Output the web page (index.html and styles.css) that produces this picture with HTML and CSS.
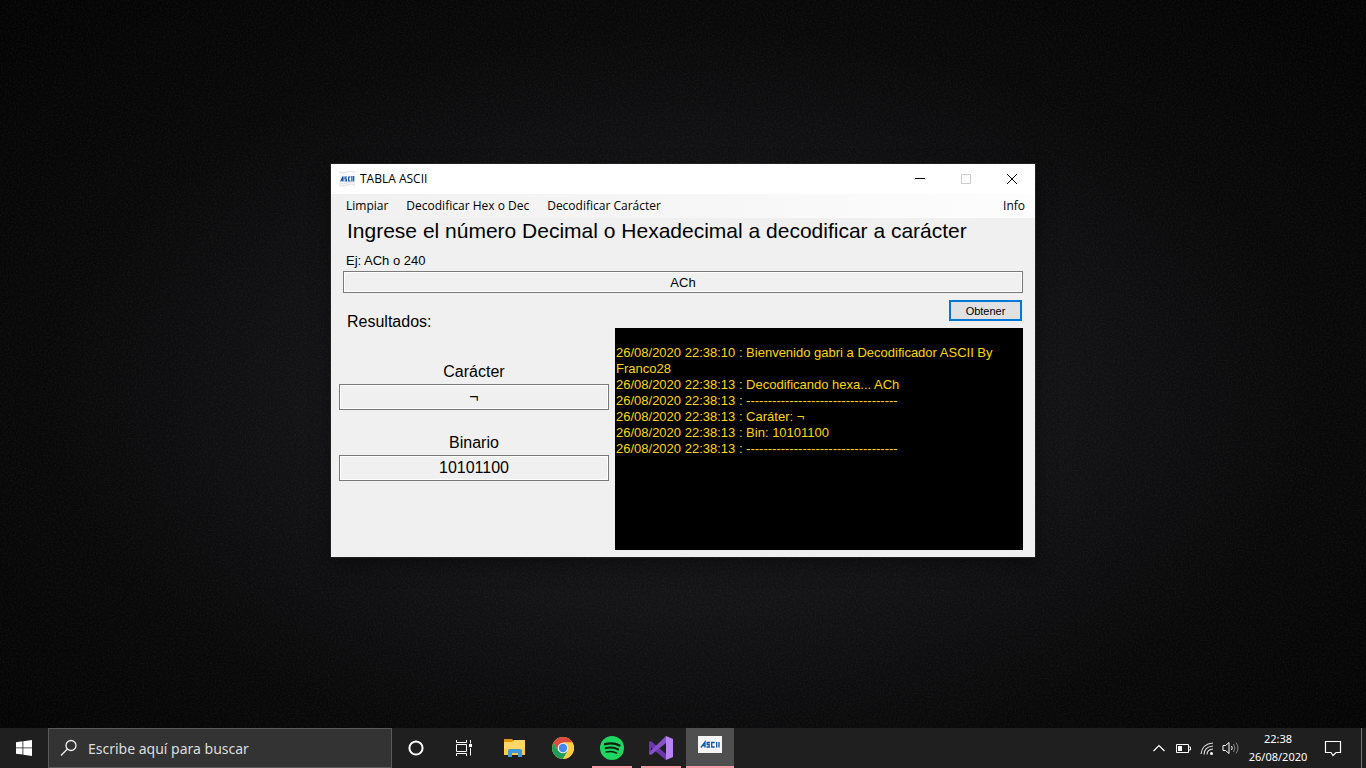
FILE: index.html
```html
<!DOCTYPE html>
<html lang="es">
<head>
<meta charset="utf-8">
<title>TABLA ASCII</title>
<link rel="stylesheet" href="styles.css">
</head>
<body>
<svg class="grain" aria-hidden="true"><filter id="noise"><feTurbulence type="fractalNoise" baseFrequency="0.6" numOctaves="2" seed="4"/><feColorMatrix type="matrix" values="0 0 0 0 1  0 0 0 0 1  0 0 0 0 1  0.35 0 0 0 -0.13"/></filter><rect width="100%" height="100%" filter="url(#noise)"/></svg>
<main class="desktop">
  <section class="window" aria-label="TABLA ASCII">
    <header class="titlebar">
      <svg class="app-icon" width="16" height="16" viewBox="0 0 16 16"><rect width="16" height="16" fill="#fafafa"/><path d="M0 1q4 2 8 0t8 0M0 14q4 2 8 0t8 0M0 12q4 2 8 0t8 0" fill="none" stroke="#e4e4e4"/><path d="M1.700 10.500L4 5.500v5M2.500 9H4M8 6H6v2h1.500v2h-2M11.500 6H9.700v4h1.800M12.900 5v5.500M14.700 5v5.500" fill="none" stroke="#0b4fa3" stroke-width="1.200"/></svg>
      <h1 class="title">TABLA ASCII</h1>
      <div class="captions">
        <button class="caption" aria-label="Minimizar"><svg width="10" height="10" viewBox="0 0 10 10"><path d="M0 4.500h10" stroke="#000"/></svg></button>
        <button class="caption" aria-label="Maximizar" disabled><svg width="10" height="10" viewBox="0 0 10 10"><path d="M.5.500h9v9h-9z" fill="none" stroke="#ccc"/></svg></button>
        <button class="caption" aria-label="Cerrar"><svg width="12" height="12" viewBox="0 0 12 12"><path d="M1 1l10 10M11 1L1 11" stroke="#000"/></svg></button>
      </div>
    </header>
    <nav class="menubar">
      <button class="menu">Limpiar</button>
      <button class="menu">Decodificar Hex o Dec</button>
      <button class="menu">Decodificar Carácter</button>
      <button class="menu menu-end">Info</button>
    </nav>
    <form class="content" onsubmit="return false">
      <h2 class="heading">Ingrese el número Decimal o Hexadecimal a decodificar a carácter</h2>
      <label class="hint" for="code">Ej: ACh o 240</label>
      <input class="field field-main" id="code" type="text" value="ACh">
      <div class="columns">
        <div class="results">
          <h3 class="results-title">Resultados:</h3>
          <label class="result-label" for="char">Carácter</label>
          <input class="field field-result" id="char" type="text" value="¬" readonly>
          <label class="result-label" for="bin">Binario</label>
          <input class="field field-result" id="bin" type="text" value="10101100" readonly>
        </div>
        <div class="output">
          <button class="submit" type="submit">Obtener</button>
          <textarea class="log" aria-label="Registro" readonly>

26/08/2020 22:38:10 : Bienvenido gabri a Decodificador ASCII By Franco28
26/08/2020 22:38:13 : Decodificando hexa... ACh
26/08/2020 22:38:13 : -----------------------------------
26/08/2020 22:38:13 : Caráter: ¬
26/08/2020 22:38:13 : Bin: 10101100
26/08/2020 22:38:13 : -----------------------------------</textarea>
        </div>
      </div>
    </form>
  </section>
</main>
<footer class="taskbar">
  <button class="start" aria-label="Inicio"><svg width="16" height="16" viewBox="0 0 16 16" fill="#fff"><path d="M0 2.200L6.500 1.300V7.500H0zM7.300 1.200L16 0v7.500H7.300zM0 8.300h6.500v6.300L0 13.700zM7.300 8.300H16V16l-8.700-1.200z"/></svg></button>
  <label class="search">
    <svg width="18" height="18" viewBox="0 0 18 18" fill="none" stroke="#eee" stroke-width="1.300"><circle cx="11" cy="6.500" r="5"/><path d="M7.400 10L1 16.500"/></svg>
    <input class="search-input" type="text" placeholder="Escribe aquí para buscar" aria-label="Buscar">
  </label>
  <div class="apps">
    <button class="app" aria-label="Cortana"><svg width="24" height="24" viewBox="0 0 24 24"><circle cx="12" cy="12" r="6.600" fill="none" stroke="#fff" stroke-width="2"/></svg></button>
    <button class="app" aria-label="Vista de tareas"><svg width="24" height="24" viewBox="0 0 24 24" fill="none" stroke="#fff"><path d="M3.500 4v2.500h10V4M3.500 8.500h10v7h-10zM3.500 20v-2.500h10V20M17.500 4v3.500M17.500 12v7.500"/><path d="M16 8h3v3h-3z" fill="#fff" stroke="none"/></svg></button>
    <button class="app" aria-label="Explorador de archivos"><svg width="24" height="24" viewBox="0 0 24 24"><path d="M2 3h8l2 2v2H2z" fill="#e09b0c"/><path d="M2 6h8l2-2h11v15H2z" fill="#ffd667"/><path d="M2 13h21v6H2z" fill="#fbc94c"/><path d="M6 21v-6q0-2 2-2h10q2 0 2 2v6h-4v-4h-6v4z" fill="#3d9bdc"/></svg></button>
    <button class="app" aria-label="Google Chrome"><svg width="24" height="24" viewBox="0 0 24 24"><circle cx="12" cy="12" r="11" fill="#fbcf45"/><path d="M2.500 6.500A11 11 0 0 1 21.500 6.500H12L7.200 14.700z" fill="#dc4b3f"/><path d="M2.500 6.500A11 11 0 0 0 12 23l4.800-8.300H7.200z" fill="#1e9e5a"/><path d="M21.500 6.500H12l4.800 8.200L12 23A11 11 0 0 0 21.500 6.500z" fill="#fccd43"/><circle cx="12" cy="12" r="5.300" fill="#f3f3f3"/><circle cx="12" cy="12" r="4.200" fill="#4688f1"/></svg></button>
    <button class="app app-open" aria-label="Spotify"><svg width="24" height="24" viewBox="0 0 24 24"><circle cx="12" cy="12" r="12" fill="#1ed760"/><g fill="none" stroke="#101e15" stroke-linecap="round"><path d="M5 8.200q8-2.300 14.500 1.300" stroke-width="2.300"/><path d="M5.600 12.200q7-2 12.500 1.200" stroke-width="1.900"/><path d="M6.200 16q6-1.500 10.500 1.100" stroke-width="1.600"/></g></svg></button>
    <button class="app app-open" aria-label="Visual Studio"><svg width="24" height="24" viewBox="0 0 24 24"><path d="M0 6l2-1 15 13v6L2 11.500V17l-2 1z" fill="#6c36ad"/><path d="M0 18l2 1L17 7V0L2 14.500z" fill="#8651c9"/><path d="M17 0l7 3v18l-7 3z" fill="#b783f5"/></svg></button>
    <button class="app app-active" aria-label="TABLA ASCII"><svg width="24" height="24" viewBox="0 0 24 24"><path d="M0 1h24v17H0z" fill="#f4f4f4"/><path d="M3 12.500L7 7v5.500M4.500 10.700H7M12 7.500H9.200v2h2v2.500H8.500M16.700 7.500h-3V12h3M18.700 7v5.500M21 7v5.500" fill="none" stroke="#0b57b0" stroke-width="1.300"/></svg></button>
  </div>
  <div class="tray">
    <button class="tray-item" aria-label="Iconos ocultos"><svg width="16" height="16" viewBox="0 0 16 16" fill="none" stroke="#fff" stroke-width="1.200"><path d="M2.500 11L8 5.500l5.500 5.500"/></svg></button>
    <button class="tray-item" aria-label="Batería"><svg width="16" height="16" viewBox="0 0 16 16"><path d="M1.500 4.500h12v8h-12zM14 7h1.500v3H14" fill="none" stroke="#fff"/><path d="M3 6h4v5H3z" fill="#fff"/></svg></button>
    <button class="tray-item" aria-label="Red"><svg width="16" height="16" viewBox="0 0 16 16" fill="none" stroke="#ddd" stroke-width="1.100"><path d="M2 14Q3 4 14 3M5 14.500Q5 7 14 6M8 14.500Q8 9.500 14 9"/><circle cx="12.500" cy="13.500" r="1.500" fill="#fff" stroke="none"/></svg></button>
    <button class="tray-item" aria-label="Volumen"><svg width="18" height="16" viewBox="0 0 18 16" fill="none" stroke="#fff"><path d="M1 5.500h2.500L7 2.500v11l-3.500-3H1z"/><path d="M9.500 6q1.500 2 0 4"/><path d="M11.500 4q3 4 0 8M14 2.500q4 5.500 0 11" stroke="#888"/></svg></button>
    <time class="clock" datetime="2020-08-26T22:38"><span>22:38</span><span>26/08/2020</span></time>
    <button class="notices" aria-label="Notificaciones"><svg width="18" height="18" viewBox="0 0 18 18" fill="none" stroke="#fff" stroke-width="1.200"><path d="M1.500 2.500h15v11H12l-3 3-2-3H1.500z"/></svg></button>
    <button class="peek" aria-label="Mostrar escritorio"></button>
  </div>
</footer>
</body>
</html>
```
FILE: styles.css
```css
* { box-sizing: border-box; }
body {
  margin: 0;
  min-height: 100vh;
  display: flex;
  flex-direction: column;
  background: radial-gradient(ellipse at 50% 52%, #18181a 0%, #131315 38%, #09090a 65%, #030304 100%);
  font-family: "Liberation Sans", Arial, sans-serif;
  color: #000;
}
button, input, textarea { font: inherit; color: inherit; border: 0; border-radius: 0; margin: 0; padding: 0; background: none; outline: 0; }
svg { display: block; flex: none; }
h1, h2, h3 { margin: 0; font-weight: 400; }
.grain { position: absolute; inset: 0; width: 100%; height: 100%; opacity: .25; }
.desktop { position: relative; flex: 1; display: flex; align-items: center; justify-content: center; padding-bottom: 7px; }
.window { width: 704px; max-width: 100%; background: #f0f0f0; box-shadow: 0 0 0 1px #202020, 0 8px 20px rgba(0, 0, 0, .4); }
.titlebar { display: flex; align-items: center; height: 30px; padding-left: 8px; gap: 5px; background: #fff; }
.title { font: 12px/30px "Open Sans", "Noto Sans", sans-serif; }
.captions { display: flex; margin-left: auto; }
.caption { width: 46px; height: 28px; display: flex; align-items: center; justify-content: center; }
.menubar { display: flex; align-items: center; height: 24px; padding: 0 1px 0 6px; background: linear-gradient(90deg, #f0f0f0, #fdfdfd); }
.menu { padding: 0 9px; font: 12px/20px "Open Sans", "Noto Sans", sans-serif; white-space: nowrap; }
.menu-end { margin-left: auto; }
.content { display: flex; flex-direction: column; padding: 0 12px 7px 8px; }
.heading { padding-left: 8px; font-size: 21px; line-height: 26px; white-space: nowrap; }
.hint { padding: 7px 7px 0; font-size: 13px; line-height: 20px; }
.field { border: 1px solid #7a7a7a; box-shadow: inset 0 0 0 1px #fff; text-align: center; width: 100%; }
.field-main { width: auto; margin-left: 4px; height: 22px; font-size: 13px; }
.columns { display: flex; gap: 6px; }
.results { width: 270px; display: flex; flex-direction: column; }
.results-title { padding: 19px 8px 27px; font-size: 16px; line-height: 20px; }
.result-label { font-size: 16px; line-height: 25px; text-align: center; }
.field-result { height: 26px; font-size: 16px; margin-bottom: 20px; }
.output { flex: 1; display: flex; flex-direction: column; padding-top: 7px; }
.submit { align-self: flex-end; width: 73px; height: 21px; margin: 0 1px 7px 0; border: 2px solid #0078d7; background: #e1e1e1; font-size: 11px; }
.log { display: block; width: 100%; height: 222px; padding: 1px 1px 0; background: #000; color: #ffd700; font-size: 13px; line-height: 16px; resize: none; overflow: hidden; }
.taskbar { position: relative; display: flex; height: 40px; background: #1f1f1f; color: #fff; font-family: "Noto Sans", "Open Sans", sans-serif; }
.start { width: 48px; display: flex; align-items: center; justify-content: center; }
.search { width: 344px; display: flex; align-items: center; gap: 10px; padding-left: 11px; border: 1px solid #5a5a5a; background: #333; }
.search-input { flex: 1; min-width: 0; font-size: 14px; }
.search-input::placeholder { color: #ddd; opacity: 1; }
.apps { display: flex; gap: 1px; }
.app { width: 48px; display: flex; align-items: center; justify-content: center; }
.app-open { background: linear-gradient(#f99ba5, #f99ba5) center bottom / 40px 2px no-repeat; }
.app-active { border-bottom: 2px solid #f99ba5; background: #4f4f4f; }
.tray { display: flex; align-items: center; margin-left: auto; }
.tray-item { width: 24px; height: 40px; display: flex; align-items: center; justify-content: center; }
.clock { width: 70px; display: flex; flex-direction: column; align-items: center; font-size: 11px; line-height: 18px; }
.notices { width: 40px; height: 40px; display: flex; align-items: center; justify-content: center; }
.peek { width: 5px; height: 40px; margin-left: 8px; border-left: 1px solid #777; }
```
